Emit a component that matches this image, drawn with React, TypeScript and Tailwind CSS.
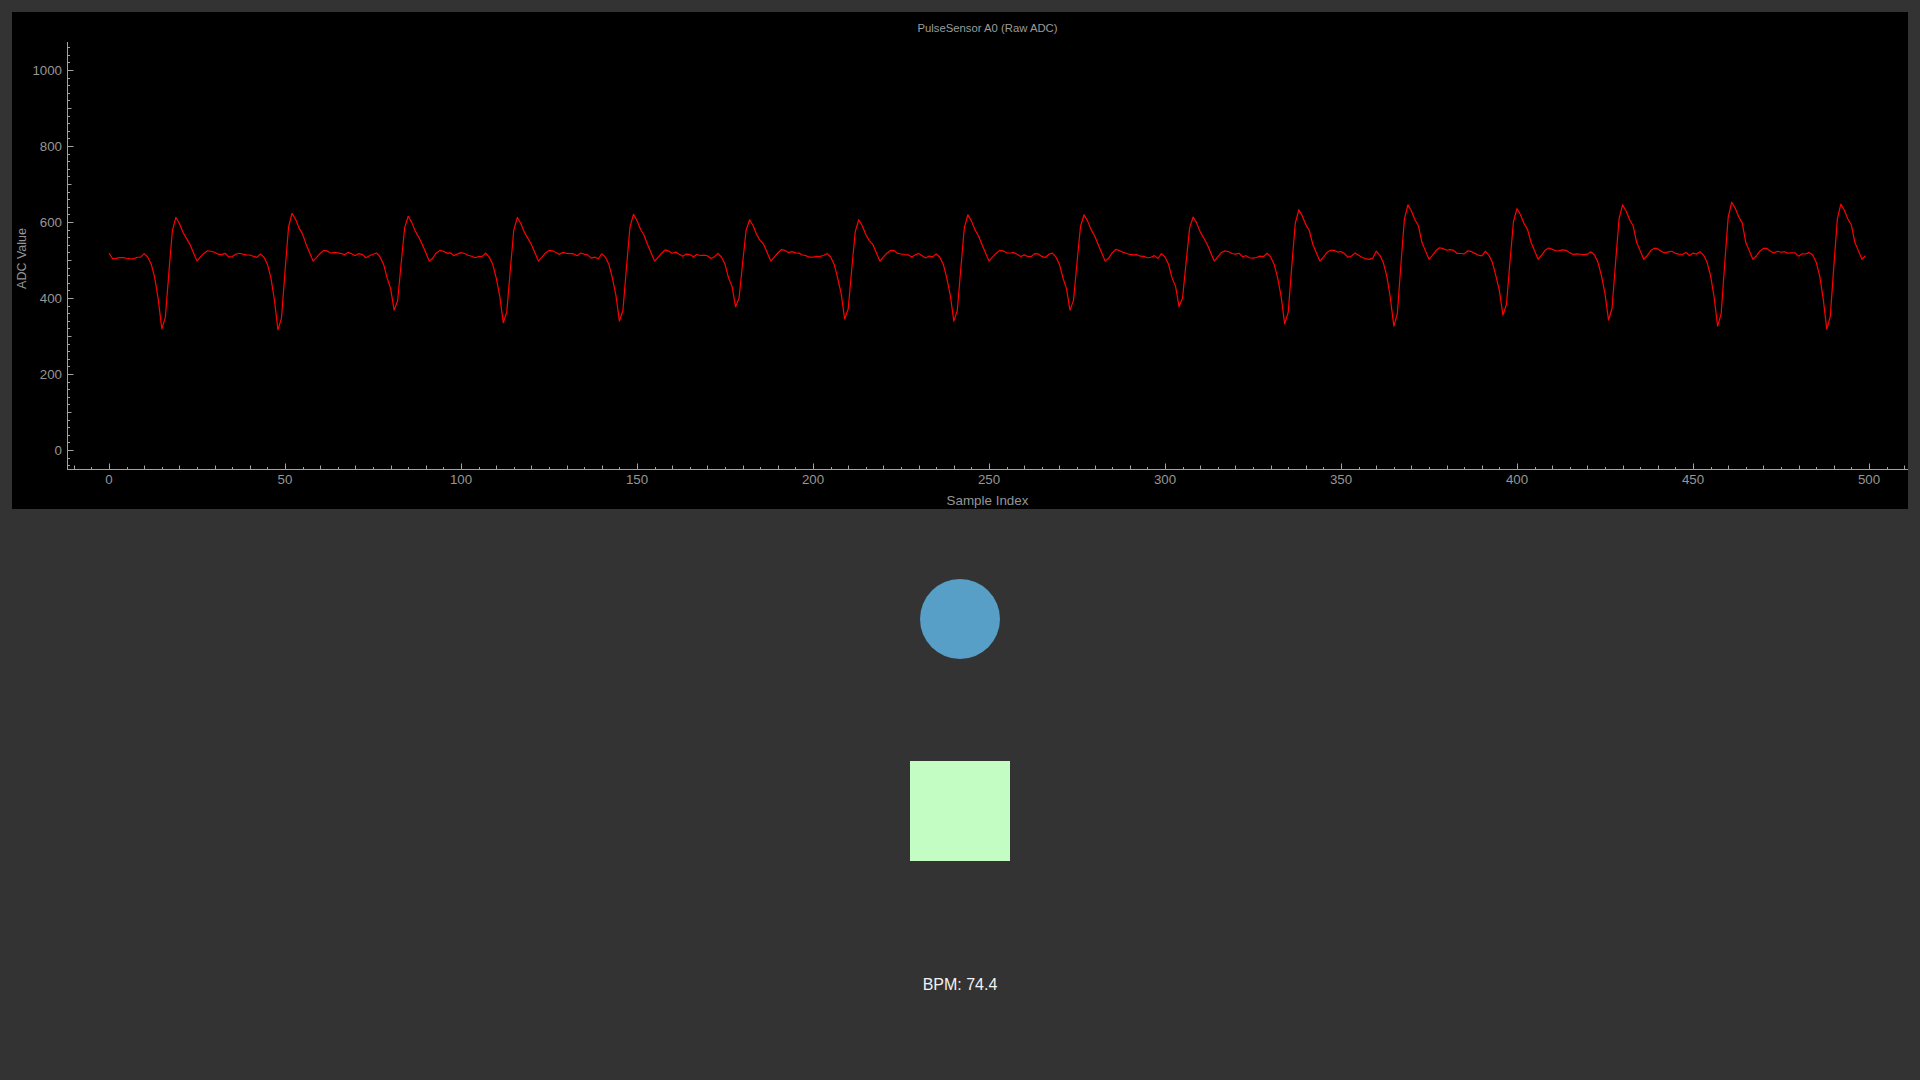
import React from 'react';

// dip index, dip value, peak value
const beats: [number, number, number][] = [
  [15, 319, 612], [48, 316, 623], [81, 368, 615], [112, 335, 612],
  [145, 339, 620], [178, 377, 606], [209, 345, 606], [240, 339, 619],
  [273, 368, 619], [304, 377, 613], [334, 332, 632], [365, 326, 645],
  [396, 355, 635], [426, 342, 645], [457, 326, 652], [488, 318, 647],
];

const buildSignal = (): number[] => {
  let seed = 98765;
  const rand = () => {
    seed = (seed * 16807) % 2147483647;
    return seed / 2147483647;
  };
  const raw: number[] = [];
  for (let i = 0; i < 502; i++) raw.push((rand() - 0.5) * 16);
  const noise = raw.map((n, i) => n * 0.7 + (raw[i + 1] ?? 0) * 0.3);

  const out: number[] = [];
  for (let i = 0; i < 500; i++) {
    // find the beat this sample belongs to
    let k = -1;
    for (let j = 0; j < beats.length; j++) {
      if (i >= beats[j][0] - 5) k = j;
    }
    if (k < 0) {
      out.push(505 + noise[i] * 0.5 + (i === 0 ? 12 : 0));
      continue;
    }
    const [d, dip, peak] = beats[k];
    const b = k > 10 ? 516 : 511;
    const o = i - d;
    const n = noise[i];
    let v: number;
    switch (o) {
      case -5: v = b + 6 + n * 0.3; break;
      case -4: v = b - 3; break;
      case -3: v = b - 22; break;
      case -2: v = b - 58; break;
      case -1: v = dip + (b - dip) * 0.4; break;
      case 0: v = dip; break;
      case 1: v = dip + (peak - dip) * 0.1; break;
      case 2: v = dip + (peak - dip) * 0.5; break;
      case 3: v = dip + (peak - dip) * 0.88; break;
      case 4: v = peak; break;
      case 5: v = peak - 16; break;
      case 6: v = peak - 39; break;
      case 7: v = peak - 55; break;
      case 8: v = b + 30; break;
      case 9: v = b + 8; break;
      case 10: v = b - 14; break;
      case 11: v = b - 4 + n * 0.3; break;
      case 12: v = b + 8 + n * 0.3; break;
      case 13: v = b + 15 + n * 0.3; break;
      case 14: v = b + 13 + n * 0.3; break;
      case 15: v = b + 8 + n * 0.4; break;
      default: {
        const next = beats[k + 1] ? beats[k + 1][0] - 5 : 500;
        const span = Math.max(1, next - (d + 16));
        const t = (o - 16) / span;
        v = b + 6 - t * 10 + n;
      }
    }
    out.push(v);
  }
  return out;
};

const signal = buildSignal();

// svg coordinate helpers (svg origin at page x=32, y=38)
const sx = (u: number) => 77 + 3.52 * u;
const sy = (v: number) => 412 - 0.38 * v;

const AXIS = '#a3a3a3';
const LABEL = '#969696';
const FONT = "'Liberation Sans', Arial, sans-serif";

const xTicks: number[] = [];
for (let u = -10; u <= 510; u += 5) xTicks.push(u);
const yTicks: number[] = [];
for (let v = -40; v <= 1060; v += 20) yTicks.push(v);

const PlotArea: React.FC = () => {
  const points = signal.map((v, i) => `${sx(i).toFixed(2)},${sy(v).toFixed(2)}`).join(' ');
  return (
    <svg width={1876} height={455} className="block">
      {/* y axis */}
      <line x1={35.5} y1={4} x2={35.5} y2={432} stroke={AXIS} strokeWidth={1} />
      {yTicks.map((v) => {
        const len = v % 200 === 0 ? 6 : v % 100 === 0 ? 4 : 2.5;
        const y = Math.round(sy(v)) + 0.5;
        return <line key={`y${v}`} x1={35.5} y1={y} x2={35.5 + len} y2={y} stroke={AXIS} strokeWidth={1} />;
      })}
      {[0, 200, 400, 600, 800, 1000].map((v) => (
        <text key={`yl${v}`} x={30} y={sy(v) + 4.8} textAnchor="end" fill={LABEL} fontSize={13.3} fontFamily={FONT}>
          {v}
        </text>
      ))}

      {/* x axis */}
      <line x1={35} y1={431.5} x2={1876} y2={431.5} stroke={AXIS} strokeWidth={1} />
      {xTicks.map((u) => {
        const len = u % 50 === 0 ? 6 : u % 10 === 0 ? 4 : 2.5;
        const x = Math.round(sx(u)) + 0.5;
        return <line key={`x${u}`} x1={x} y1={431.5} x2={x} y2={431.5 - len} stroke={AXIS} strokeWidth={1} />;
      })}
      {[0, 50, 100, 150, 200, 250, 300, 350, 400, 450, 500].map((u) => (
        <text key={`xl${u}`} x={sx(u)} y={445.8} textAnchor="middle" fill={LABEL} fontSize={13.3} fontFamily={FONT}>
          {u}
        </text>
      ))}

      <polyline points={points} fill="none" stroke="#ff0000" strokeWidth={1.2} strokeLinejoin="round" />
    </svg>
  );
};

const App: React.FC = () => {
  return (
    <div className="h-[1080px] w-full overflow-hidden bg-[#333333] pt-[12px] font-['Liberation_Sans',Arial,sans-serif]">
      <div className="mx-[12px] flex h-[497px] flex-col bg-black">
        <div className="h-[26px] pl-[55px] pt-[9px] text-center text-[11.3px] leading-[14px] text-[#9c9c9c]">
          PulseSensor A0 (Raw ADC)
        </div>
        <div className="flex h-[455px]">
          <div className="flex w-[20px] items-center justify-center pb-[14px]">
            <span className="rotate-180 text-[12.5px] leading-[14px] text-[#969696] [writing-mode:vertical-rl]">
              ADC Value
            </span>
          </div>
          <PlotArea />
        </div>
        <div className="h-[16px] pl-[55px] text-center text-[13.4px] leading-[16px] text-[#969696]">
          Sample Index
        </div>
      </div>

      <div className="flex flex-col items-center">
        <div className="mt-[70px] h-[80px] w-[80px] rounded-full bg-[#579fc7]" />
        <div className="mt-[102px] h-[100px] w-[100px] bg-[#c3fdc3]" />
        <div className="mt-[114px] text-[16px] font-medium leading-[20px] text-[#f2f2f2]">BPM: 74.4</div>
      </div>
    </div>
  );
};

export default App;
